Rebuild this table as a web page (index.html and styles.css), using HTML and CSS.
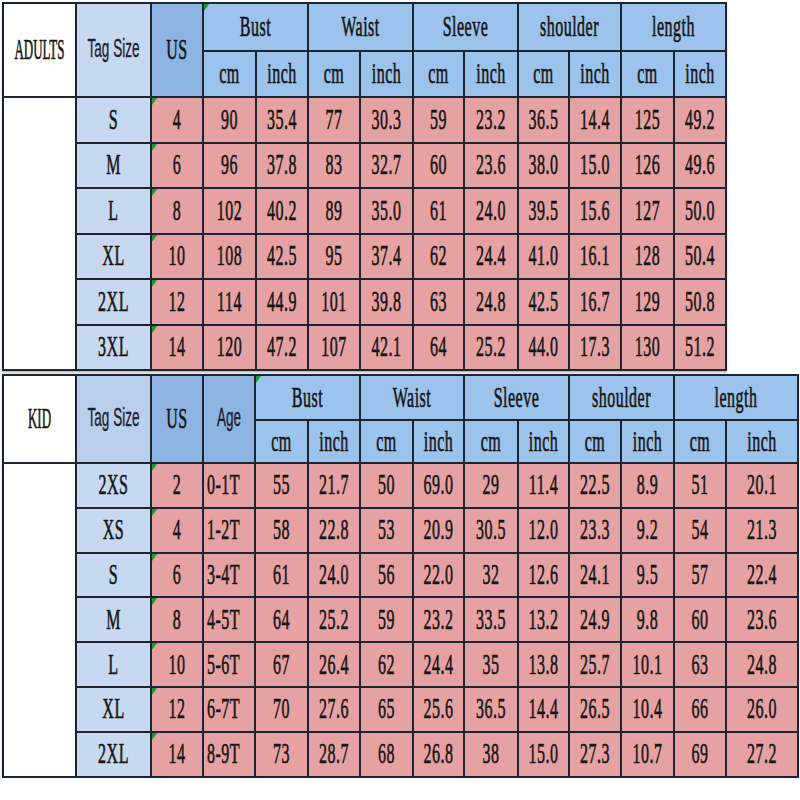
FILE: index.html
```html
<!DOCTYPE html>
<html>
<head>
<meta charset="utf-8">
<link rel="stylesheet" href="styles.css">
</head>
<body>
<div class="page">
  <div class="grid adults">
    <div class="c lbl hdr2"><span class="big">ADULTS</span></div>
    <div class="c tag-h hdr2"><span class="sans">Tag Size</span></div>
    <div class="c us-h hdr2"><span>US</span></div>
    <div class="c grp tri"><span>Bust</span></div>
    <div class="c grp"><span>Waist</span></div>
    <div class="c grp"><span>Sleeve</span></div>
    <div class="c grp"><span>shoulder</span></div>
    <div class="c grp"><span>length</span></div>
    <div class="c sub"><span>cm</span></div><div class="c sub"><span>inch</span></div>
    <div class="c sub"><span>cm</span></div><div class="c sub"><span>inch</span></div>
    <div class="c sub"><span>cm</span></div><div class="c sub"><span>inch</span></div>
    <div class="c sub"><span>cm</span></div><div class="c sub"><span>inch</span></div>
    <div class="c sub"><span>cm</span></div><div class="c sub"><span>inch</span></div>
    <div class="blank a-blank"></div>

    <div class="c tag"><span>S</span></div><div class="c d tri"><span>4</span></div><div class="c d"><span>90</span></div><div class="c d"><span>35.4</span></div><div class="c d"><span>77</span></div><div class="c d"><span>30.3</span></div><div class="c d"><span>59</span></div><div class="c d"><span>23.2</span></div><div class="c d"><span>36.5</span></div><div class="c d"><span>14.4</span></div><div class="c d"><span>125</span></div><div class="c d"><span>49.2</span></div>
    <div class="c tag"><span>M</span></div><div class="c d tri"><span>6</span></div><div class="c d"><span>96</span></div><div class="c d"><span>37.8</span></div><div class="c d"><span>83</span></div><div class="c d"><span>32.7</span></div><div class="c d"><span>60</span></div><div class="c d"><span>23.6</span></div><div class="c d"><span>38.0</span></div><div class="c d"><span>15.0</span></div><div class="c d"><span>126</span></div><div class="c d"><span>49.6</span></div>
    <div class="c tag"><span>L</span></div><div class="c d tri"><span>8</span></div><div class="c d"><span>102</span></div><div class="c d"><span>40.2</span></div><div class="c d"><span>89</span></div><div class="c d"><span>35.0</span></div><div class="c d"><span>61</span></div><div class="c d"><span>24.0</span></div><div class="c d"><span>39.5</span></div><div class="c d"><span>15.6</span></div><div class="c d"><span>127</span></div><div class="c d"><span>50.0</span></div>
    <div class="c tag"><span>XL</span></div><div class="c d tri"><span>10</span></div><div class="c d"><span>108</span></div><div class="c d"><span>42.5</span></div><div class="c d"><span>95</span></div><div class="c d"><span>37.4</span></div><div class="c d"><span>62</span></div><div class="c d"><span>24.4</span></div><div class="c d"><span>41.0</span></div><div class="c d"><span>16.1</span></div><div class="c d"><span>128</span></div><div class="c d"><span>50.4</span></div>
    <div class="c tag"><span>2XL</span></div><div class="c d tri"><span>12</span></div><div class="c d"><span>114</span></div><div class="c d"><span>44.9</span></div><div class="c d"><span>101</span></div><div class="c d"><span>39.8</span></div><div class="c d"><span>63</span></div><div class="c d"><span>24.8</span></div><div class="c d"><span>42.5</span></div><div class="c d"><span>16.7</span></div><div class="c d"><span>129</span></div><div class="c d"><span>50.8</span></div>
    <div class="c tag"><span>3XL</span></div><div class="c d tri"><span>14</span></div><div class="c d"><span>120</span></div><div class="c d"><span>47.2</span></div><div class="c d"><span>107</span></div><div class="c d"><span>42.1</span></div><div class="c d"><span>64</span></div><div class="c d"><span>25.2</span></div><div class="c d"><span>44.0</span></div><div class="c d"><span>17.3</span></div><div class="c d"><span>130</span></div><div class="c d"><span>51.2</span></div>
  </div>

  <div class="grid kids">
    <div class="c lbl hdr2"><span class="big">KID</span></div>
    <div class="c tag-h k-tag-h hdr2"><span class="sans">Tag Size</span></div>
    <div class="c us-h hdr2"><span>US</span></div>
    <div class="c us-h hdr2"><span class="sans">Age</span></div>
    <div class="c grp tri"><span>Bust</span></div>
    <div class="c grp"><span>Waist</span></div>
    <div class="c grp"><span>Sleeve</span></div>
    <div class="c grp"><span>shoulder</span></div>
    <div class="c grp"><span>length</span></div>
    <div class="c sub"><span>cm</span></div><div class="c sub"><span>inch</span></div>
    <div class="c sub"><span>cm</span></div><div class="c sub"><span>inch</span></div>
    <div class="c sub"><span>cm</span></div><div class="c sub"><span>inch</span></div>
    <div class="c sub"><span>cm</span></div><div class="c sub"><span>inch</span></div>
    <div class="c sub"><span>cm</span></div><div class="c sub"><span>inch</span></div>
    <div class="blank k-blank"></div>

    <div class="c tag"><span>2XS</span></div><div class="c d tri"><span>2</span></div><div class="c d age"><span>0-1T</span></div><div class="c d"><span>55</span></div><div class="c d"><span>21.7</span></div><div class="c d"><span>50</span></div><div class="c d"><span>69.0</span></div><div class="c d"><span>29</span></div><div class="c d"><span>11.4</span></div><div class="c d"><span>22.5</span></div><div class="c d"><span>8.9</span></div><div class="c d"><span>51</span></div><div class="c d"><span>20.1</span></div>
    <div class="c tag"><span>XS</span></div><div class="c d tri"><span>4</span></div><div class="c d age"><span>1-2T</span></div><div class="c d"><span>58</span></div><div class="c d"><span>22.8</span></div><div class="c d"><span>53</span></div><div class="c d"><span>20.9</span></div><div class="c d"><span>30.5</span></div><div class="c d"><span>12.0</span></div><div class="c d"><span>23.3</span></div><div class="c d"><span>9.2</span></div><div class="c d"><span>54</span></div><div class="c d"><span>21.3</span></div>
    <div class="c tag"><span>S</span></div><div class="c d tri"><span>6</span></div><div class="c d age"><span>3-4T</span></div><div class="c d"><span>61</span></div><div class="c d"><span>24.0</span></div><div class="c d"><span>56</span></div><div class="c d"><span>22.0</span></div><div class="c d"><span>32</span></div><div class="c d"><span>12.6</span></div><div class="c d"><span>24.1</span></div><div class="c d"><span>9.5</span></div><div class="c d"><span>57</span></div><div class="c d"><span>22.4</span></div>
    <div class="c tag"><span>M</span></div><div class="c d tri"><span>8</span></div><div class="c d age"><span>4-5T</span></div><div class="c d"><span>64</span></div><div class="c d"><span>25.2</span></div><div class="c d"><span>59</span></div><div class="c d"><span>23.2</span></div><div class="c d"><span>33.5</span></div><div class="c d"><span>13.2</span></div><div class="c d"><span>24.9</span></div><div class="c d"><span>9.8</span></div><div class="c d"><span>60</span></div><div class="c d"><span>23.6</span></div>
    <div class="c tag"><span>L</span></div><div class="c d tri"><span>10</span></div><div class="c d age"><span>5-6T</span></div><div class="c d"><span>67</span></div><div class="c d"><span>26.4</span></div><div class="c d"><span>62</span></div><div class="c d"><span>24.4</span></div><div class="c d"><span>35</span></div><div class="c d"><span>13.8</span></div><div class="c d"><span>25.7</span></div><div class="c d"><span>10.1</span></div><div class="c d"><span>63</span></div><div class="c d"><span>24.8</span></div>
    <div class="c tag"><span>XL</span></div><div class="c d tri"><span>12</span></div><div class="c d age"><span>6-7T</span></div><div class="c d"><span>70</span></div><div class="c d"><span>27.6</span></div><div class="c d"><span>65</span></div><div class="c d"><span>25.6</span></div><div class="c d"><span>36.5</span></div><div class="c d"><span>14.4</span></div><div class="c d"><span>26.5</span></div><div class="c d"><span>10.4</span></div><div class="c d"><span>66</span></div><div class="c d"><span>26.0</span></div>
    <div class="c tag"><span>2XL</span></div><div class="c d tri"><span>14</span></div><div class="c d age"><span>8-9T</span></div><div class="c d"><span>73</span></div><div class="c d"><span>28.7</span></div><div class="c d"><span>68</span></div><div class="c d"><span>26.8</span></div><div class="c d"><span>38</span></div><div class="c d"><span>15.0</span></div><div class="c d"><span>27.3</span></div><div class="c d"><span>10.7</span></div><div class="c d"><span>69</span></div><div class="c d"><span>27.2</span></div>
  </div>
</div>
</body>
</html>
```

FILE: styles.css
```css
html, body {
  margin: 0;
  padding: 0;
  background: #ffffff;
}

.page {
  padding: 2px 0 0 2px;
  display: flex;
  flex-direction: column;
  gap: 3px;
  align-items: flex-start;
}

.grid {
  display: grid;
  gap: 2px;
  padding: 2px;
  background: #1d2533;
  font-family: "Liberation Serif", "Times New Roman", serif;
  font-weight: normal;
  font-size: 16px;
  color: #161616;
  box-shadow: 0 2px 2px rgba(0, 0, 0, 0.25);
}

.adults {
  grid-template-columns: 71px 73px 50px 51px 50px 50px 51px 49px 52px 49px 50px 51px 50px;
  grid-template-rows: 46px 44px repeat(6, 43.5px);
}

.kids {
  grid-template-columns: 71px 73px 50px 50px 51px 50px 51px 49px 52px 49px 50px 51px 50px 70px;
  grid-template-rows: 43px 41px repeat(7, 42.8px);
}

.c {
  position: relative;
  display: flex;
  align-items: center;
  justify-content: center;
  overflow: visible;
}

.c > span {
  display: inline-block;
  line-height: 18px;
  transform: scaleY(1.85);
  white-space: nowrap;
  letter-spacing: 0.5px;
  -webkit-text-stroke: 0.35px #161616;
}

.c > span.big {
  font-size: 13px;
  letter-spacing: 0;
  transform: scaleY(2.3);
  -webkit-text-stroke: 0.3px #161616;
}

.c > span.sans {
  font-family: "Liberation Sans", Arial, sans-serif;
  font-size: 13.5px;
  letter-spacing: 0;
  color: #1c2230;
  transform: scaleY(1.85);
  -webkit-text-stroke: 0.2px #1c2230;
}

.hdr2 {
  grid-row: span 2;
}

.grp {
  grid-column: span 2;
  background: #9cc3ec;
}

.sub {
  background: #9cc3ec;
}

.lbl {
  background: #ffffff;
}

.tag-h {
  background: #c6d9f1;
}

.k-tag-h {
  background: #b9cfeb;
}

.us-h {
  background: #8db4e2;
}

.blank {
  background: #ffffff;
  grid-column: 1;
}

.a-blank {
  grid-row: 3 / span 6;
}

.k-blank {
  grid-row: 3 / span 7;
}

.tag {
  background: #c6d9f1;
}

.d {
  background: #e6a2a2;
}

.age {
  justify-content: flex-start;
  padding-left: 3px;
}

.tri::before {
  content: "";
  position: absolute;
  top: 0;
  left: 0;
  border-top: 7px solid #199a34;
  border-right: 5px solid transparent;
}
```
